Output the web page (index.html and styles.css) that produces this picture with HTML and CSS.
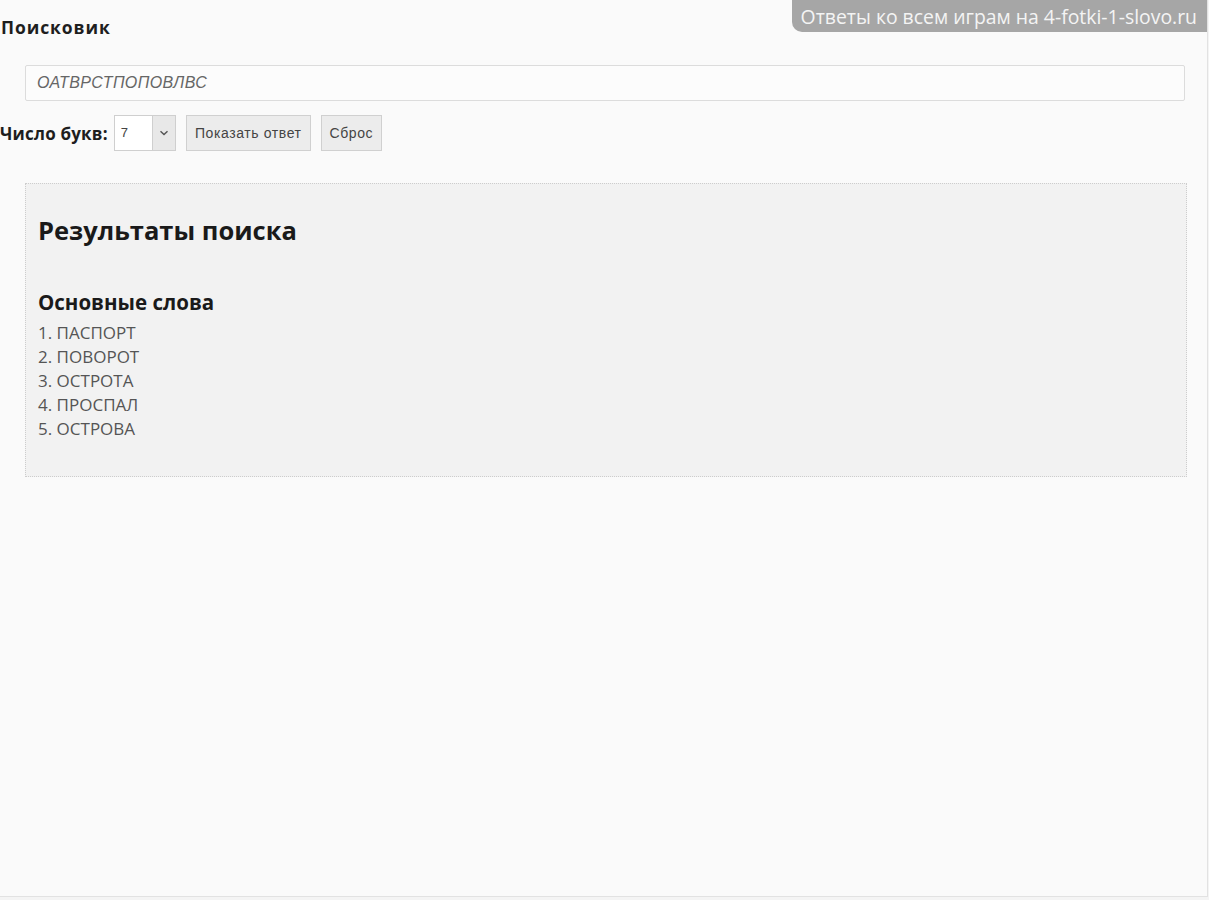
FILE: index.html
```html
<!DOCTYPE html>
<html lang="ru">
<head>
<meta charset="utf-8">
<title>Поисковик</title>
<link rel="stylesheet" href="styles.css">
</head>
<body>
<div class="frame">
  <div class="badge">Ответы ко всем играм на 4-fotki-1-slovo.ru</div>
  <h1 class="title">Поисковик</h1>
  <div class="search-wrap">
    <div class="search-input">ОАТВРСТПОПОВЛВС</div>
  </div>
  <div class="controls">
    <span class="label">Число букв:</span>
    <div class="select">
      <span class="select-value">7</span>
      <span class="select-arrow">
        <svg width="10" height="6" viewBox="0 0 10 6"><path d="M1.5 1.2 L5 4.6 L8.5 1.2" fill="none" stroke="#555" stroke-width="1.4"/></svg>
      </span>
    </div>
    <div class="btn btn-show">Показать ответ</div>
    <div class="btn btn-reset">Сброс</div>
  </div>
  <div class="results">
    <h2 class="results-title">Результаты поиска</h2>
    <h3 class="results-sub">Основные слова</h3>
    <ol class="words">
      <li>1. ПАСПОРТ</li>
      <li>2. ПОВОРОТ</li>
      <li>3. ОСТРОТА</li>
      <li>4. ПРОСПАЛ</li>
      <li>5. ОСТРОВА</li>
    </ol>
  </div>
</div>
</body>
</html>
```
FILE: styles.css
```css
html, body {
  margin: 0;
  padding: 0;
  background: #f4f4f4;
}
body {
  font-family: "Open Sans", "Noto Sans", sans-serif;
  color: #222;
}
.frame {
  position: relative;
  width: 1208px;
  height: 897px;
  background: #fafafa;
  border-right: 1px solid #e2e2e2;
  border-bottom: 1px solid #e2e2e2;
  box-sizing: border-box;
  overflow: hidden;
}
.badge {
  position: absolute;
  top: 0;
  right: -1px;
  height: 32px;
  padding: 0 11px 0 9px;
  background: #a6a6a6;
  color: #f4f4f4;
  font-size: 19.4px;
  line-height: 33px;
  border-bottom-left-radius: 10px;
  white-space: nowrap;
}
.title {
  margin: 0;
  padding: 15px 0 0 1px;
  font-size: 17.5px;
  letter-spacing: 0.9px;
  font-weight: 700;
  line-height: 24px;
  color: #1e1e1e;
}
.search-wrap {
  padding: 26px 22px 0 25px;
}
.search-input {
  height: 36px;
  box-sizing: border-box;
  border: 1px solid #dcdcdc;
  border-radius: 2px;
  background: #fcfcfc;
  padding: 0 11px;
  font-family: "Liberation Sans", Arial, sans-serif;
  font-style: italic;
  font-size: 16px;
  letter-spacing: 0.4px;
  line-height: 34px;
  color: #666;
}
.controls {
  display: flex;
  align-items: center;
  padding-top: 14px;
  height: 36px;
}
.label {
  font-size: 17px;
  letter-spacing: 0.2px;
  font-weight: 700;
  color: #1e1e1e;
  margin-right: 6px;
}
.select {
  display: flex;
  width: 62px;
  height: 36px;
  box-sizing: border-box;
  border: 1px solid #cfcfcf;
  background: #fff;
}
.select-value {
  flex: 1;
  padding-left: 6px;
  font-family: "Liberation Sans", Arial, sans-serif;
  font-size: 13px;
  line-height: 34px;
  color: #444;
}
.select-arrow {
  width: 22px;
  display: flex;
  align-items: center;
  justify-content: center;
  background: #e8e8e8;
  border-left: 1px solid #cfcfcf;
}
.btn {
  height: 36px;
  box-sizing: border-box;
  border: 1px solid #d0d0d0;
  background: #ececec;
  font-family: "Liberation Sans", Arial, sans-serif;
  font-size: 14px;
  letter-spacing: 0.6px;
  line-height: 34px;
  color: #444;
  margin-left: 10px;
  text-align: center;
}
.btn-show { width: 125px; }
.btn-reset { width: 61px; }
.results {
  margin: 32px 20px 0 25px;
  height: 294px;
  box-sizing: border-box;
  background: #f2f2f2;
  border: 1px dotted #cdcdcd;
  padding: 24px 12px 0 12px;
}
.results-title {
  margin: 0;
  font-size: 25.5px;
  font-weight: 700;
  line-height: 44px;
  color: #1a1a1a;
}
.results-sub {
  margin: 0;
  padding-top: 36px;
  font-size: 20.5px;
  font-weight: 700;
  line-height: 28px;
  color: #1a1a1a;
}
.words {
  list-style: none;
  margin: 5px 0 0 0;
  padding: 0;
  font-size: 17px;
  line-height: 24px;
  color: #555;
}
```
